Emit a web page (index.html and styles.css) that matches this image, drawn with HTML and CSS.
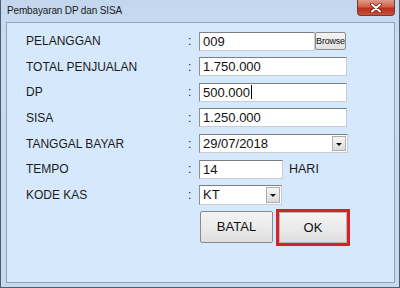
FILE: index.html
```html
<!DOCTYPE html>
<html lang="id">
<head>
    <meta charset="UTF-8" />
    <title>Pembayaran DP dan SISA</title>
    <link rel="stylesheet" href="styles.css">
</head>
<body>
    <div class="window">
        <div class="titlebar">
            <span class="title">Pembayaran DP dan SISA</span>
            <span class="close">
                <svg width="14" height="10" viewBox="0 0 14 10">
                    <path d="M3 1.5 L11 8.5 M11 1.5 L3 8.5" stroke="#6a1a10" stroke-width="3.6" stroke-linecap="round" />
                    <path d="M3 1.5 L11 8.5 M11 1.5 L3 8.5" stroke="#fff" stroke-width="2" stroke-linecap="round" />
                </svg>
            </span>
        </div>
        <div class="client">
            <form class="form" autocomplete="off">
                <span class="label">PELANGGAN</span><span class="colon">:</span>
                <div class="field">
                    <div class="box pelanggan">009</div>
                    <button type="button" class="browse">Browse</button>
                </div>

                <span class="label">TOTAL PENJUALAN</span><span class="colon">:</span>
                <div class="field"><div class="box wide">1.750.000</div></div>

                <span class="label">DP</span><span class="colon">:</span>
                <div class="field"><div class="box wide">500.000<i class="caret"></i></div></div>

                <span class="label">SISA</span><span class="colon">:</span>
                <div class="field"><div class="box wide">1.250.000</div></div>

                <span class="label">TANGGAL BAYAR</span><span class="colon">:</span>
                <div class="field">
                    <div class="box combo date">29/07/2018<span class="arrow"></span></div>
                </div>

                <span class="label">TEMPO</span><span class="colon">:</span>
                <div class="field">
                    <div class="box tempo">14</div>
                    <span class="unit">HARI</span>
                </div>

                <span class="label">KODE KAS</span><span class="colon">:</span>
                <div class="field">
                    <div class="box combo kas">KT<span class="arrow"></span></div>
                </div>

                <div class="actions">
                    <button type="button" class="btn">BATAL</button>
                    <button type="button" class="btn ok">OK</button>
                </div>
            </form>
        </div>
    </div>
</body>
</html>
```

FILE: styles.css
```css
* {
    margin: 0;
    padding: 0;
    box-sizing: border-box;
}

body {
    font-family: "Liberation Sans", Arial, sans-serif;
    color: #1b1b1b;
}

.window {
    width: 400px;
    height: 288px;
    display: flex;
    flex-direction: column;
    padding: 0 4px 4px 5px;
    border: 1px solid #4e5d6d;
    border-top: 0;
    background: linear-gradient(#c2d7ee, #c9dcf1 40px, #c6d9ee);
}

.titlebar {
    height: 22px;
    display: flex;
    justify-content: space-between;
    align-items: flex-start;
}

.title {
    padding: 5px 0 0 1px;
    font-size: 10px;
    letter-spacing: -0.15px;
    color: #1a1a1a;
}

.close {
    width: 38px;
    height: 16px;
    display: flex;
    align-items: center;
    justify-content: center;
    border: 1px solid #7a3a30;
    border-top: 0;
    border-radius: 0 0 4px 4px;
    background: linear-gradient(#e29a88, #cf6049 45%, #b8301d 55%, #c6513c);
}

.client {
    flex: 1;
    border: 1px solid #8ea3ba;
    background: #d6e8fb;
    padding: 8px 0 0 19px;
}

.form {
    display: grid;
    grid-template-columns: 161px 12px 1fr;
    grid-auto-rows: 20px;
    row-gap: 5.67px;
    align-items: center;
}

.label {
    font-size: 12px;
}

.colon {
    font-size: 12px;
    padding-left: 1px;
}

.field {
    display: flex;
    align-items: center;
    height: 20px;
}

.box {
    position: relative;
    height: 19px;
    padding: 1px 0 0 3px;
    background: #fff;
    border: 1px solid #c9ccd2;
    border-top-color: #7b7f86;
    border-left-color: #8b8f96;
    font-size: 13px;
    line-height: 16px;
    color: #111;
}

.pelanggan {
    width: 116px;
}

.wide {
    width: 148px;
}

.date {
    width: 149px;
}

.tempo {
    width: 84px;
}

.kas {
    width: 83px;
    height: 20px;
}

.caret {
    display: inline-block;
    width: 1px;
    height: 14px;
    margin-left: 1px;
    vertical-align: -2px;
    background: #000;
}

.arrow {
    position: absolute;
    top: 1px;
    right: 1px;
    bottom: 1px;
    width: 14px;
    border: 1px solid #a9adb4;
    background: linear-gradient(#f6f6f6, #dcdcdc);
}

.arrow::after {
    content: "";
    position: absolute;
    left: 3px;
    top: 6px;
    border-left: 3px solid transparent;
    border-right: 3px solid transparent;
    border-top: 3px solid #111;
}

.browse {
    width: 31px;
    height: 18px;
    font-family: "Liberation Sans", Arial, sans-serif;
    font-size: 9px;
    letter-spacing: -0.2px;
    color: #111;
    border: 1px solid #8c8c8c;
    border-radius: 2px;
    background: linear-gradient(#f4f4f4, #e2e2e2);
}

.unit {
    margin-left: 6px;
    font-size: 12.5px;
}

.actions {
    grid-column: 3;
    grid-row: 8;
    align-self: start;
    display: flex;
    gap: 6px;
    padding-left: 1px;
}

.btn {
    width: 73px;
    height: 32px;
    font-family: "Liberation Sans", Arial, sans-serif;
    font-size: 13px;
    color: #111;
    border: 1px solid #8a8a8a;
    border-radius: 2px;
    background: linear-gradient(#f3f3f3, #ebebeb 50%, #dedede);
}

.ok {
    width: 68px;
    height: 31px;
    margin-top: 1px;
    border-radius: 0;
    border-color: #b8b8b8;
    outline: 3px solid #d8202a;
}
```
